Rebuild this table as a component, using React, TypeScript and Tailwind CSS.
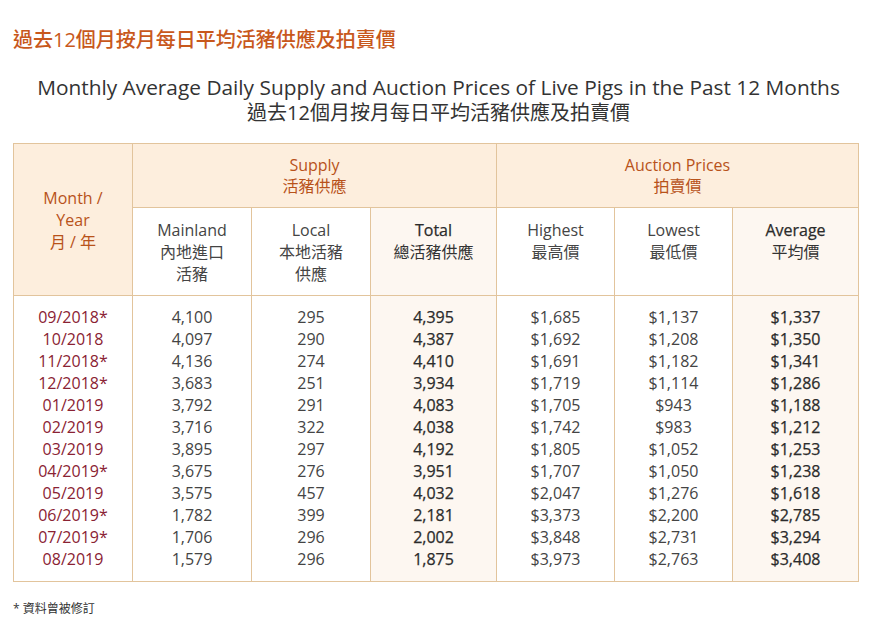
import React from 'react';

interface Row {
  month: string;
  mainland: string;
  local: string;
  total: string;
  highest: string;
  lowest: string;
  average: string;
}

const rows: Row[] = [
  { month: '09/2018*', mainland: '4,100', local: '295', total: '4,395', highest: '$1,685', lowest: '$1,137', average: '$1,337' },
  { month: '10/2018', mainland: '4,097', local: '290', total: '4,387', highest: '$1,692', lowest: '$1,208', average: '$1,350' },
  { month: '11/2018*', mainland: '4,136', local: '274', total: '4,410', highest: '$1,691', lowest: '$1,182', average: '$1,341' },
  { month: '12/2018*', mainland: '3,683', local: '251', total: '3,934', highest: '$1,719', lowest: '$1,114', average: '$1,286' },
  { month: '01/2019', mainland: '3,792', local: '291', total: '4,083', highest: '$1,705', lowest: '$943', average: '$1,188' },
  { month: '02/2019', mainland: '3,716', local: '322', total: '4,038', highest: '$1,742', lowest: '$983', average: '$1,212' },
  { month: '03/2019', mainland: '3,895', local: '297', total: '4,192', highest: '$1,805', lowest: '$1,052', average: '$1,253' },
  { month: '04/2019*', mainland: '3,675', local: '276', total: '3,951', highest: '$1,707', lowest: '$1,050', average: '$1,238' },
  { month: '05/2019', mainland: '3,575', local: '457', total: '4,032', highest: '$2,047', lowest: '$1,276', average: '$1,618' },
  { month: '06/2019*', mainland: '1,782', local: '399', total: '2,181', highest: '$3,373', lowest: '$2,200', average: '$2,785' },
  { month: '07/2019*', mainland: '1,706', local: '296', total: '2,002', highest: '$3,848', lowest: '$2,731', average: '$3,294' },
  { month: '08/2019', mainland: '1,579', local: '296', total: '1,875', highest: '$3,973', lowest: '$2,763', average: '$3,408' },
];

const font = { fontFamily: '"Open Sans", "Noto Sans CJK TC", sans-serif' };

// semibold look for the total / average columns
const strong = 'text-[#2b2b2b] [-webkit-text-stroke:0.25px_#2b2b2b]';

// body column: one cell holding all twelve lines
function BodyCol({ values, className }: { values: string[]; className: string }) {
  return (
    <td className={`border border-[#e2c49c] pt-[10px] pb-[11px] align-top text-center ${className}`}>
      {values.map((v, i) => (
        <div key={i} className="leading-[22px]">
          {v}
        </div>
      ))}
    </td>
  );
}

export default function App() {
  return (
    <div className="bg-white w-[877px] h-[628px] overflow-hidden px-[13px]" style={font}>
      <h1 className="pt-[28px] text-[20px] leading-[24px] text-[#c8581c] font-medium">
        過去12個月按月每日平均活豬供應及拍賣價
      </h1>

      <div className="mt-[22px] text-center text-[#333]">
        <div className="text-[20.85px] leading-[26px]">
          Monthly Average Daily Supply and Auction Prices of Live Pigs in the Past 12 Months
        </div>
        <div className="text-[20px] leading-[26px]">過去12個月按月每日平均活豬供應及拍賣價</div>
      </div>

      <table className="mt-[17px] w-[845px] border-collapse table-fixed text-[16px] text-[#444]">
        <colgroup>
          <col className="w-[119px]" />
          <col className="w-[119px]" />
          <col className="w-[119px]" />
          <col className="w-[126px]" />
          <col className="w-[118px]" />
          <col className="w-[118px]" />
          <col className="w-[126px]" />
        </colgroup>
        <thead>
          <tr className="bg-[#fdeedd] text-[#b8521a]">
            <th rowSpan={2} className="border border-[#e2c49c] font-normal leading-[22px] align-middle">
              <div>Month /</div>
              <div>Year</div>
              <div>月 / 年</div>
            </th>
            <th colSpan={3} className="border border-[#e2c49c] font-normal leading-[21px] pt-[11px] pb-[10px]">
              <div>Supply</div>
              <div>活豬供應</div>
            </th>
            <th colSpan={3} className="border border-[#e2c49c] font-normal leading-[21px] pt-[11px] pb-[10px]">
              <div>Auction Prices</div>
              <div>拍賣價</div>
            </th>
          </tr>
          <tr className="leading-[22px] align-top">
            <th className="border border-[#e2c49c] bg-white font-normal pt-[11px] pb-[10px]">
              <div>Mainland</div>
              <div>內地進口</div>
              <div>活豬</div>
            </th>
            <th className="border border-[#e2c49c] bg-white font-normal pt-[11px] pb-[10px]">
              <div>Local</div>
              <div>本地活豬</div>
              <div>供應</div>
            </th>
            <th className="border border-[#e2c49c] bg-[#fdf7f1] font-normal pt-[11px] pb-[10px]">
              <div className={strong}>Total</div>
              <div className="text-[#333]">總活豬供應</div>
            </th>
            <th className="border border-[#e2c49c] bg-white font-normal pt-[11px] pb-[10px]">
              <div>Highest</div>
              <div>最高價</div>
            </th>
            <th className="border border-[#e2c49c] bg-white font-normal pt-[11px] pb-[10px]">
              <div>Lowest</div>
              <div>最低價</div>
            </th>
            <th className="border border-[#e2c49c] bg-[#fdf7f1] font-normal pt-[11px] pb-[10px]">
              <div className={strong}>Average</div>
              <div className="text-[#333]">平均價</div>
            </th>
          </tr>
        </thead>
        <tbody>
          <tr>
            <BodyCol values={rows.map((r) => r.month)} className="text-[#8a2233]" />
            <BodyCol values={rows.map((r) => r.mainland)} className="" />
            <BodyCol values={rows.map((r) => r.local)} className="" />
            <BodyCol values={rows.map((r) => r.total)} className={`bg-[#fdf7f1] ${strong}`} />
            <BodyCol values={rows.map((r) => r.highest)} className="" />
            <BodyCol values={rows.map((r) => r.lowest)} className="" />
            <BodyCol values={rows.map((r) => r.average)} className={`bg-[#fdf7f1] ${strong}`} />
          </tr>
        </tbody>
      </table>

      <p className="mt-[18px] text-[12px] text-[#333]">* 資料曾被修訂</p>
    </div>
  );
}
